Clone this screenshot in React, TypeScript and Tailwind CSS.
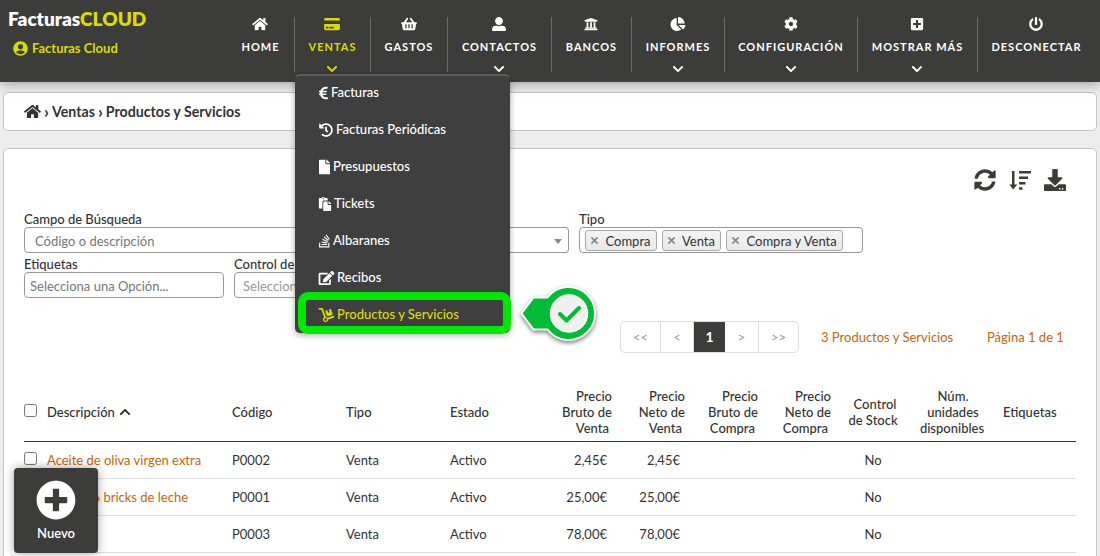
import type { ReactNode } from "react";
import type { IconType } from "react-icons";
import {
  FaChartPie,
  FaChevronDown,
  FaChevronUp,
  FaCog,
  FaCreditCard,
  FaDolly,
  FaDownload,
  FaEdit,
  FaEuroSign,
  FaFile,
  FaHistory,
  FaHome,
  FaPaste,
  FaPlusCircle,
  FaPlusSquare,
  FaPowerOff,
  FaShoppingBasket,
  FaStackOverflow,
  FaSyncAlt,
  FaUniversity,
  FaUserAlt,
  FaUserCircle,
} from "react-icons/fa";

type NavEntry = { label: string; icon: IconType; width: string; active?: boolean; more?: boolean };

const NAV: NavEntry[] = [
  { label: "Home", icon: FaHome, width: "w-[68px]" },
  { label: "Ventas", icon: FaCreditCard, width: "w-[76px]", active: true, more: true },
  { label: "Gastos", icon: FaShoppingBasket, width: "w-[77px]" },
  { label: "Contactos", icon: FaUserAlt, width: "w-[104px]", more: true },
  { label: "Bancos", icon: FaUniversity, width: "w-[80px]" },
  { label: "Informes", icon: FaChartPie, width: "w-[93px]", more: true },
  { label: "Configuración", icon: FaCog, width: "w-[133px]", more: true },
  { label: "Mostrar más", icon: FaPlusSquare, width: "w-[120px]", more: true },
  { label: "Desconectar", icon: FaPowerOff, width: "w-[117px]" },
];

const MENU: { label: string; icon: IconType; size: string; active?: boolean }[] = [
  { label: "Facturas", icon: FaEuroSign, size: "w-[9px]" },
  { label: "Facturas Periódicas", icon: FaHistory, size: "w-[14px]" },
  { label: "Presupuestos", icon: FaFile, size: "w-[11px]" },
  { label: "Tickets", icon: FaPaste, size: "w-[12px]" },
  { label: "Albaranes", icon: FaStackOverflow, size: "w-[11px]" },
  { label: "Recibos", icon: FaEdit, size: "w-[15px]" },
  { label: "Productos y Servicios", icon: FaDolly, size: "w-[15px]", active: true },
];

// The floating "Nuevo" button covers the start of the last two names.
const PRODUCTS = [
  { name: "Aceite de oliva virgen extra", code: "P0002", price: "2,45€" },
  { name: "Caja de 6 bricks de leche", code: "P0001", price: "25,00€" },
  { name: "", code: "P0003", price: "78,00€" },
];

const COLUMNS =
  "grid grid-cols-[23px_185px_114px_104px_89px_73px_73px_73px_73px_84px_77px_84px]";

function VentasMenu() {
  return (
    <div className="absolute left-0 top-[57px] z-20 h-[259px] w-[215px] rounded-[5px] border-t-2 border-[#5c5c5c] bg-[#3f3f3f] pl-6 shadow-[0_2px_6px_rgba(0,0,0,0.35)]">
      <div className="-mt-[2px]">
        {MENU.map(({ label, icon: Icon, size, active }) => (
          <a
            key={label}
            className={`flex h-[37px] items-center gap-[3px] whitespace-nowrap text-[13px] font-medium ${
              active ? "text-[#dadb00]" : "text-white"
            }`}
          >
            <Icon className={`h-[14px] shrink-0 overflow-visible ${size}`} preserveAspectRatio="xMidYMid slice" />
            {label}
          </a>
        ))}
      </div>
      <div className="absolute left-[3px] top-[216px] h-[42px] w-[213px] rounded-[10px] border-8 border-[#00e800]" />
    </div>
  );
}

function Header() {
  return (
    <header className="relative z-10 flex h-[82px] justify-between bg-[#3c3c3b] pr-[5px] shadow-[0_2px_12px_rgba(0,0,0,0.35)]">
      <div className="pl-2 pt-[7px] text-[#dadb00]">
        <div className="text-[19px] font-extrabold leading-6">
          <span className="text-white">Facturas</span>CLOUD
        </div>
        <div className="flex items-center gap-1 pl-[5px] pt-[9px] text-[13px] font-bold leading-4">
          <FaUserCircle className="size-[15px]" />
          Facturas Cloud
        </div>
      </div>
      <nav className="flex pt-[17px]">
        {NAV.map(({ label, icon: Icon, width, active, more }, i) => (
          <div
            key={label}
            className={`relative flex h-[55px] shrink-0 flex-col items-center ${width} ${
              active ? "text-[#dadb00]" : "text-white"
            } ${i < NAV.length - 1 ? "border-r border-[#6a6a69]" : ""}`}
          >
            <Icon className="mr-px h-[14px] w-[16px] shrink-0" />
            <span className="mt-[8px] whitespace-nowrap text-[11px] font-bold uppercase leading-4 tracking-[1px]">
              {label}
            </span>
            {more && <FaChevronDown className="mr-px mt-[8px] size-3 shrink-0" />}
            {active && <VentasMenu />}
          </div>
        ))}
      </nav>
    </header>
  );
}

function SortIcon() {
  return (
    <svg viewBox="0 0 22 22" className="size-[22px]" fill="currentColor">
      <path d="M3 2h2.500v13.500H8.300L4.250 20.500.2 15.500H3zM10 2h12v2.500H10zM10 7.500h9V10h-9zM10 13h6.500v2.500H10zM10 18.200h3.500v2.500H10z" />
    </svg>
  );
}

function Field({ label, width, children }: { label: string; width: string; children: ReactNode }) {
  return (
    <div className={width}>
      <div className="h-4 whitespace-nowrap text-[13px] font-medium leading-4">{label}</div>
      <div className="flex h-[26px] items-center whitespace-nowrap rounded-[4px] border border-[#999] text-[13px] text-[#777]">
        {children}
      </div>
    </div>
  );
}

function Tag({ children }: { children: ReactNode }) {
  return (
    <span className="mr-[5px] flex h-[21px] items-center rounded-[3px] border border-[#aaa] bg-linear-to-b from-[#f4f4f4] to-[#e8e8e8] pl-1 pr-[5px] text-[#333]">
      <svg viewBox="0 0 10 10" className="mr-[6.5px] size-[9px]" stroke="#888" strokeWidth="1.8">
        <path d="M1.500 1.500l7 7M8.500 1.500l-7 7" />
      </svg>
      <span className="pt-[3px]">{children}</span>
    </span>
  );
}

function Filters() {
  return (
    <div className="flex flex-col gap-[3px] pt-5">
      <div className="flex">
        <Field label="Campo de Búsqueda" width="w-[350px]">
          <span className="pl-[10px] pt-[3px]">Código o descripción</span>
        </Field>
        <div className="w-[195px] pt-4">
          <div className="-ml-3 flex h-[26px] items-center justify-end rounded-r-[4px] border border-l-0 border-[#999] bg-white pr-[6px]">
            <span className="mt-[2px] border-x-4 border-t-[5px] border-x-transparent border-t-[#888]" />
          </div>
        </div>
        <div className="w-[10px]" />
        <Field label="Tipo" width="w-[284px]">
          <div className="flex pl-[5px]">
            <Tag>Compra</Tag>
            <Tag>Venta</Tag>
            <Tag>Compra y Venta</Tag>
          </div>
        </Field>
      </div>
      <div className="flex gap-[10px]">
        <Field label="Etiquetas" width="w-[200px]">
          <span className="pl-[5px] pt-[3px]">Selecciona una Opción...</span>
        </Field>
        <Field label="Control de Stock" width="w-[200px]">
          <span className="pl-2 pt-[4px] text-[#999]">Selecciona...</span>
        </Field>
      </div>
    </div>
  );
}

function Pager() {
  return (
    <div className="mt-[23px] flex h-8 items-center pl-[596px] text-[13px] text-[#c8640a]">
      <div className="flex h-8 overflow-hidden rounded-[5px] border border-[#ddd] text-center text-[13px] leading-[31px] text-[#999]">
        <span className="w-10 border-r border-[#ddd]">&lt;&lt;</span>
        <span className="w-[33px] border-r border-[#ddd]">&lt;</span>
        <span className="w-[31px] bg-[#3c3c3b] text-[14px] font-bold leading-[30px] text-white">1</span>
        <span className="w-[34px] border-r border-[#ddd]">&gt;</span>
        <span className="w-[39px]">&gt;&gt;</span>
      </div>
      <span className="ml-[22px] w-[166px] whitespace-nowrap pt-[2px]">3 Productos y Servicios</span>
      <span className="whitespace-nowrap pt-[2px]">Página 1 de 1</span>
    </div>
  );
}

function Checkbox() {
  return <span className="block size-[13px] rounded-[2.5px] border border-[#767676] bg-white" />;
}

function PriceHead({ kind, of }: { kind: string; of: string }) {
  return (
    <div className="text-right">
      Precio
      <br />
      {kind} de
      <br />
      <span className="pr-[3px]">{of}</span>
    </div>
  );
}

function ProductTable() {
  return (
    <div className="mt-[29px] text-[13px] text-[#333]">
      <div className={`${COLUMNS} h-[60px] items-center border-b border-[#333] font-medium leading-4`}>
        <div className="pb-[2px]">
          <Checkbox />
        </div>
        <div className="flex items-center gap-1">
          Descripción <FaChevronUp className="size-3" />
        </div>
        <div>Código</div>
        <div>Tipo</div>
        <div>Estado</div>
        <PriceHead kind="Bruto" of="Venta" />
        <PriceHead kind="Neto" of="Venta" />
        <PriceHead kind="Bruto" of="Compra" />
        <PriceHead kind="Neto" of="Compra" />
        <div className="text-center">
          <span className="pl-1">Control</span>
          <br />
          de Stock
        </div>
        <div className="pr-[3px] text-center">
          <span className="pl-[2px]">Núm.</span>
          <br />
          <span className="pl-[2px]">unidades</span>
          <br />
          disponibles
        </div>
        <div className="pl-[11px]">Etiquetas</div>
      </div>
      {PRODUCTS.map((p) => (
        <div key={p.code} className={`${COLUMNS} h-[37px] items-center border-b border-[#ddd] pt-[2px]`}>
          <div className="pb-[6px]">
            <Checkbox />
          </div>
          <a className="whitespace-nowrap text-[#c8640a]">{p.name}</a>
          <div>{p.code}</div>
          <div>Venta</div>
          <div>Activo</div>
          <div className="pr-[5px] text-right">{p.price}</div>
          <div className="pr-[5px] text-right">{p.price}</div>
          <div />
          <div />
          <div className="text-center">No</div>
        </div>
      ))}
    </div>
  );
}

function CheckCallout() {
  return (
    <svg
      viewBox="0 0 84 64"
      className="absolute left-[516.5px] top-[281.500px] z-20 h-16 w-[84px] drop-shadow-[0_2px_2px_rgba(0,0,0,0.5)]"
    >
      <path
        d="M4.500 31.500L16.500 15.500H30.500A26.500 26.500 0 1 1 30.500 47.500H16.500Z"
        fill="#00bd35"
        stroke="#fff"
        strokeWidth="2"
      />
      <circle cx="52" cy="31.500" r="18.500" fill="#f0f0f0" stroke="#fff" strokeWidth="1.500" />
      <path
        d="M43 32L49.500 38.500L62 26"
        fill="none"
        stroke="#00bd35"
        strokeWidth="4"
        strokeLinecap="round"
        strokeLinejoin="round"
      />
    </svg>
  );
}

export default function App() {
  return (
    <div className="relative h-[556px] w-[1100px] overflow-hidden bg-[#ededed] font-['Lato',sans-serif] text-[#333]">
      <Header />
      <div className="mx-[3px] mt-[10px] flex h-[39px] items-center gap-[3px] rounded-[5px] border border-[#c4c4c4] bg-white pl-5 text-[14.2px] font-bold">
        <FaHome className="h-[15px] w-[17px]" />
        <span className="text-[17px] leading-4">›</span>
        <span>Ventas</span>
        <span className="text-[17px] leading-4">›</span>
        <span>Productos y Servicios</span>
      </div>
      <main className="mx-[3px] mt-[17px] h-[420px] rounded-[5px] border border-[#c4c4c4] bg-white px-5">
        <div className="flex justify-end gap-[13px] pr-[10px] pt-5 text-[#3c3c3b]">
          <FaSyncAlt className="size-[22px]" />
          <SortIcon />
          <FaDownload className="size-[22px]" />
        </div>
        <Filters />
        <Pager />
        <ProductTable />
      </main>
      <CheckCallout />
      <button
        type="button"
        className="absolute left-[14px] top-[468px] z-10 flex h-[85px] w-[84px] flex-col items-center rounded-[4px] bg-[#3c3c3b] pt-3 text-[13px] font-semibold leading-4 text-white shadow-[0_0_10px_rgba(0,0,0,0.4)]"
      >
        <FaPlusCircle className="size-10" />
        <span className="mt-[5px]">Nuevo</span>
      </button>
    </div>
  );
}
